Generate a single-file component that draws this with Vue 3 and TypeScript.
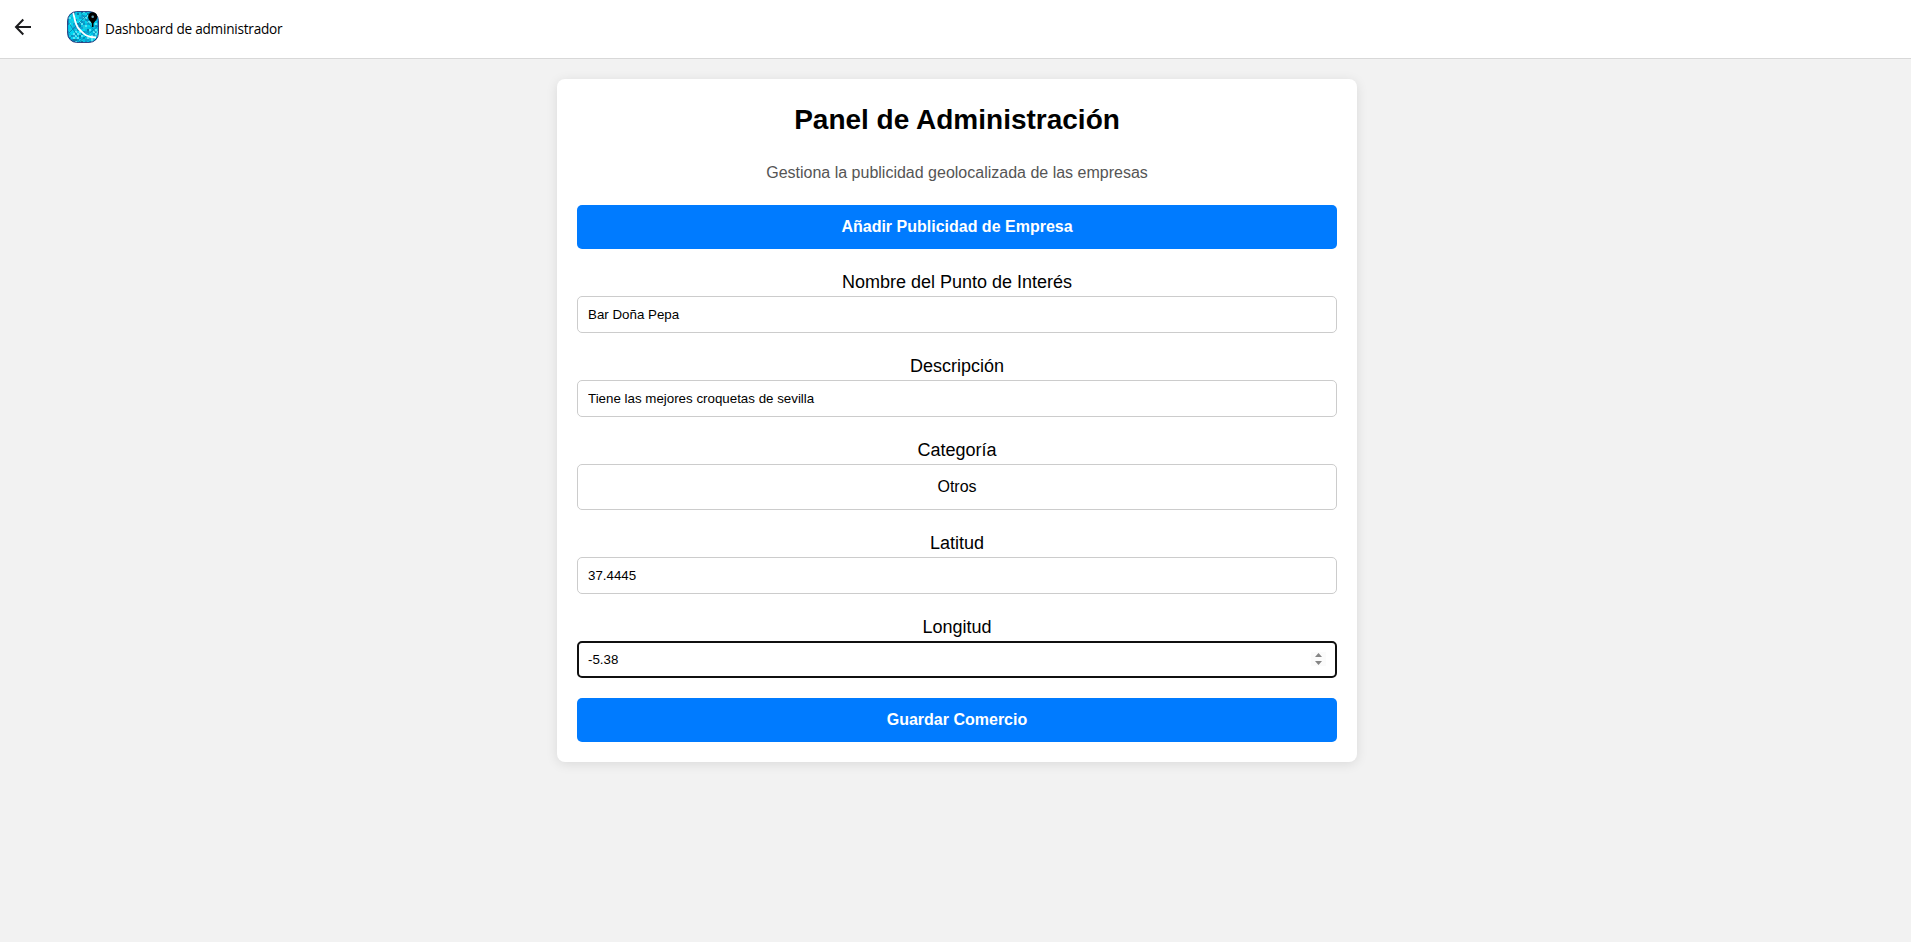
<script setup lang="ts">
import { ref } from 'vue'

interface Tile { x: number; y: number; c: string }

const nombre = ref('Bar Doña Pepa')
const descripcion = ref('Tiene las mejores croquetas de sevilla')
const categoria = ref('Otros')
const latitud = ref('37.4445')
const longitud = ref('-5.38')

// City blocks of the map logo
const shades = ['#00c0e4', '#00d8f0', '#0894c4', '#18c8e0', '#10a0d0', '#58e4f4', '#0880a8', '#00d0f0']
const tiles: Tile[] = []
for (let y = 0; y < 16; y++) {
  for (let x = 0; x < 16; x++) {
    const n = (x * 73 + y * 151 + x * y * 37 + ((x ^ y) * 19)) % 101
    tiles.push({ x: x * 2, y: y * 2, c: shades[n % shades.length] })
  }
}
</script>

<template>
  <div class="page">
    <header class="topbar">
      <button class="back" aria-label="Volver">
        <svg width="18" height="18" viewBox="0 0 18 18" fill="none" stroke="#1c1c1e" stroke-width="2">
          <path d="M17 9H2.5M9.3 1.5L2 9l7.3 7.5" />
        </svg>
      </button>
      <svg class="logo" width="32" height="32" viewBox="0 0 32 32">
        <defs><clipPath id="logo-clip"><rect x="0.5" y="0.5" width="31" height="31" rx="9" /></clipPath></defs>
        <g clip-path="url(#logo-clip)">
          <rect v-for="(t, i) in tiles" :key="i" :x="t.x" :y="t.y" width="2" height="2" :fill="t.c" />
          <path d="M2 12l9 14M14 2l15 20M2 22L21 3M12 31L31 15" stroke="#087fa8" stroke-width=".8" fill="none" />
          <path d="M6 1C8 8 8 14 12 18S18 26 29 26.5" stroke="#fff" stroke-width="1.8" fill="none" />
        </g>
        <rect x=".6" y=".6" width="30.8" height="30.8" rx="9" fill="none" stroke="#101060" stroke-width=".8" />
        <path d="M25.7 1.2a4.6 4.6 0 0 0-4.6 4.7c0 2.8 2.8 4.6 3.8 6.6v3.5h1.6v-3.5c1-2 3.8-3.8 3.8-6.6a4.6 4.6 0 0 0-4.6-4.7z" fill="#000" />
        <circle cx="25.7" cy="5.8" r="1.3" fill="#60a0b4" />
      </svg>
      <span class="title">Dashboard de administrador</span>
    </header>
    <main class="card">
      <h1>Panel de Administración</h1>
      <p class="subtitle">Gestiona la publicidad geolocalizada de las empresas</p>
      <button class="action">Añadir Publicidad de Empresa</button>
      <form class="form" @submit.prevent>
        <label>Nombre del Punto de Interés</label>
        <input v-model="nombre" type="text" />
        <label>Descripción</label>
        <input v-model="descripcion" type="text" />
        <label>Categoría</label>
        <div class="select">{{ categoria }}</div>
        <label>Latitud</label>
        <input v-model="latitud" type="text" />
        <label>Longitud</label>
        <div class="active">
          <input v-model="longitud" type="text" />
          <span class="spin">
            <svg width="15" height="14" viewBox="0 0 15 14" fill="#858585">
              <path d="M4 5L7.5 1L11 5zM4 9L7.5 13L11 9z" />
            </svg>
          </span>
        </div>
        <button class="action save">Guardar Comercio</button>
      </form>
    </main>
  </div>
</template>

<style>
body { margin: 0; background: #f2f2f2; }
</style>

<style scoped>
* { box-sizing: border-box; }
.page {
  display: flow-root;
  min-height: 942px;
  background: #f2f2f2;
  font-family: "Liberation Sans", Arial, sans-serif;
  color: #000;
}
.topbar {
  display: flex;
  align-items: center;
  height: 59px;
  padding: 0 0 4px 14px;
  background: #fff;
  border-bottom: 1px solid #d8d8d8;
}
.back { display: flex; padding: 0; border: 0; background: none; }
.logo { margin-left: 35px; flex: none; }
.title {
  margin-left: 6px;
  padding-top: 3px;
  font: 13.6px/20px "Open Sans", "Noto Sans", sans-serif;
  letter-spacing: -0.23px;
  white-space: nowrap;
}
.card {
  width: 800px;
  height: 683px;
  margin: 20px 0 0 557px;
  padding: 20px;
  background: #fff;
  border-radius: 8px;
  box-shadow: 0 2px 12px rgba(0, 0, 0, .1);
  text-align: center;
}
h1 { margin: 0; padding-top: 1px; font-size: 28px; line-height: 40px; }
.subtitle { margin: 24px 0 23px; height: 18px; font-size: 16px; line-height: 18px; color: #555; }
.action {
  display: block;
  width: 100%;
  height: 44px;
  padding: 0;
  border: 0;
  border-radius: 5px;
  background: #007bff;
  color: #fff;
  font: bold 16px/44px "Liberation Sans", Arial, sans-serif;
}
.form { display: flex; flex-direction: column; }
label { margin-top: 20px; font-size: 18px; line-height: 27px; }
input {
  width: 100%;
  height: 37px;
  padding: 0 10px;
  border: 1px solid #ccc;
  border-radius: 5px;
  background: #fff;
  color: #000;
  font: 13.333px "Liberation Sans", Arial, sans-serif;
  outline: none;
}
.select {
  height: 46px;
  border: 1px solid #ccc;
  border-radius: 5px;
  font-size: 16px;
  line-height: 44px;
}
.active {
  display: flex;
  align-items: center;
  height: 37px;
  padding: 0 9px;
  border: 2px solid #101010;
  border-radius: 5px;
}
.active input { flex: 1; height: 33px; padding: 0; border: 0; }
.spin { display: flex; margin-bottom: 1px; background: #fbfbfb; }
.save { margin-top: 20px; }
</style>
